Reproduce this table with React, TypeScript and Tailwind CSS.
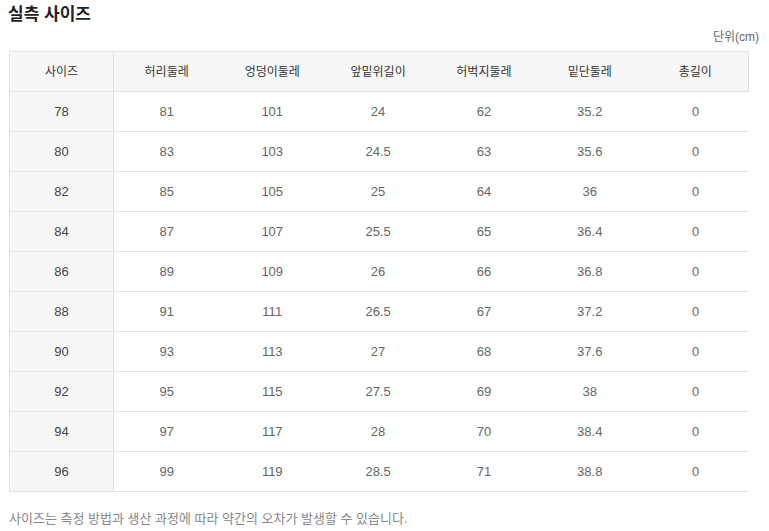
import React from 'react';

const headers = ['사이즈', '허리둘레', '엉덩이둘레', '앞밑위길이', '허벅지둘레', '밑단둘레', '총길이'];

const rows: (string | number)[][] = [
  [78, 81, 101, 24, 62, 35.2, 0],
  [80, 83, 103, 24.5, 63, 35.6, 0],
  [82, 85, 105, 25, 64, 36, 0],
  [84, 87, 107, 25.5, 65, 36.4, 0],
  [86, 89, 109, 26, 66, 36.8, 0],
  [88, 91, 111, 26.5, 67, 37.2, 0],
  [90, 93, 113, 27, 68, 37.6, 0],
  [92, 95, 115, 27.5, 69, 38, 0],
  [94, 97, 117, 28, 70, 38.4, 0],
  [96, 99, 119, 28.5, 71, 38.8, 0],
];

const App: React.FC = () => {
  return (
    <div
      className="w-[769px] h-[531px] bg-white px-[9px] pt-[3px]"
      style={{ fontFamily: '"Liberation Sans", "Noto Sans CJK KR", sans-serif' }}
    >
      <h2 className="text-[17px] font-bold text-[#222] leading-[24px] ml-[-1px]">실측 사이즈</h2>
      <div className="flex justify-end text-[12px] text-[#666] leading-[16px] mt-[2px] mb-[6px] pr-[1px]">
        단위(cm)
      </div>
      <table className="w-[740px] border-collapse table-fixed">
        <thead>
          <tr className="h-[40px] bg-[#f7f7f7]">
            {headers.map((h, i) => (
              <th
                key={h}
                className={
                  'font-normal text-[12px] text-[#333] border-y border-[#e3e3e3] ' +
                  (i === 0 ? 'w-[104px] border-l border-r ' : '') +
                  (i === headers.length - 1 ? 'border-r' : '')
                }
              >
                {h}
              </th>
            ))}
          </tr>
        </thead>
        <tbody>
          {rows.map((r) => (
            <tr key={r[0]} className="h-[40px]">
              {r.map((v, i) =>
                i === 0 ? (
                  <td
                    key={i}
                    className="text-center text-[13px] text-[#444] bg-[#f7f7f7] border border-[#e3e3e3]"
                  >
                    {v}
                  </td>
                ) : (
                  <td key={i} className="text-center text-[13px] text-[#666] border-y border-[#e3e3e3]">
                    {v}
                  </td>
                )
              )}
            </tr>
          ))}
        </tbody>
      </table>
      <p className="text-[13px] text-[#888] mt-[18px] leading-[18px]">
        사이즈는 측정 방법과 생산 과정에 따라 약간의 오차가 발생할 수 있습니다.
      </p>
    </div>
  );
};

export default App;
